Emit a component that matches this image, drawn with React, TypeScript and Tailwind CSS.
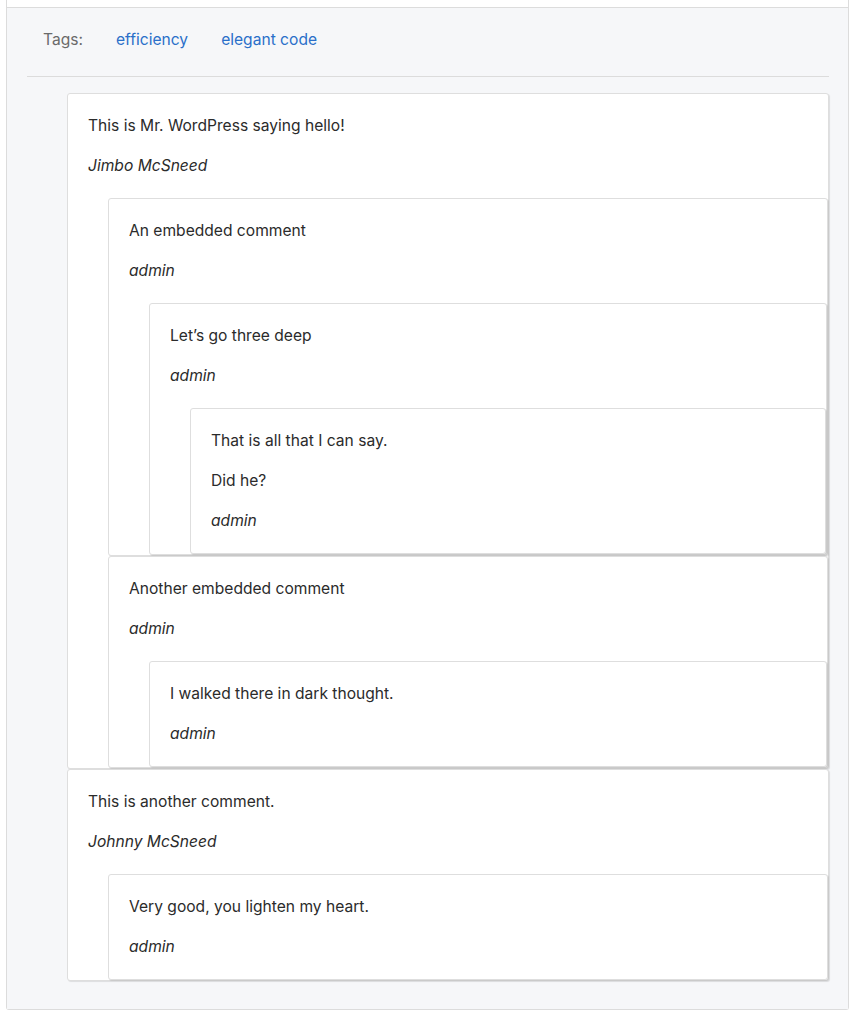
type Comment = {
  id: string;
  lines: string[];
  author: string;
  replies?: Comment[];
};

const COMMENTS: Comment[] = [
  {
    id: 'c1',
    lines: ['This is Mr. WordPress saying hello!'],
    author: 'Jimbo McSneed',
    replies: [
      {
        id: 'c2',
        lines: ['An embedded comment'],
        author: 'admin',
        replies: [
          {
            id: 'c3',
            lines: ['Let’s go three deep'],
            author: 'admin',
            replies: [
              {
                id: 'c4',
                lines: ['That is all that I can say.', 'Did he?'],
                author: 'admin',
              },
            ],
          },
        ],
      },
      {
        id: 'c5',
        lines: ['Another embedded comment'],
        author: 'admin',
        replies: [
          {
            id: 'c6',
            lines: ['I walked there in dark thought.'],
            author: 'admin',
          },
        ],
      },
    ],
  },
  {
    id: 'c7',
    lines: ['This is another comment.'],
    author: 'Johnny McSneed',
    replies: [
      {
        id: 'c8',
        lines: ['Very good, you lighten my heart.'],
        author: 'admin',
      },
    ],
  },
];

function CommentList({ comments }: { comments: Comment[] }) {
  return (
    <ul className="pl-10">
      {comments.map((c) => (
        <CommentItem key={c.id} comment={c} />
      ))}
    </ul>
  );
}

function CommentItem({ comment }: { comment: Comment }) {
  return (
    <li className="rounded-[3px] border border-[#dedede] bg-white pt-5 shadow-[1px_1px_1px_rgba(0,0,0,0.1)]">
      {comment.lines.map((line) => (
        <p key={line} className="mb-4 pl-5">
          {line}
        </p>
      ))}
      <p className="mb-5 pl-5 italic">{comment.author}</p>
      {comment.replies && <CommentList comments={comment.replies} />}
    </li>
  );
}

export default function App() {
  return (
    <div
      className="min-h-screen bg-white pr-[8px] pl-[6px] text-[15.6px] leading-6 text-[#2b2b2b]"
      style={{ fontFamily: 'Inter, "Liberation Sans", sans-serif' }}
    >
      <div className="rounded-b-[3px] border-x border-b border-[#dcdcdc]">
        <div className="h-[7px] bg-white" />
        <div className="border-t border-[#dcdcdc] bg-[#f6f7f9] pr-[19px] pl-5 pb-7">
          <div className="flex gap-[33px] border-b border-[#dcdcdc] px-4 pt-5 pb-6">
            <span className="text-[#6a6a6a]">Tags:</span>
            <a href="#" className="text-[#2a6fc9]">efficiency</a>
            <a href="#" className="text-[#2a6fc9]">elegant code</a>
          </div>
          <div className="mt-4">
            <CommentList comments={COMMENTS} />
          </div>
        </div>
      </div>
    </div>
  );
}
